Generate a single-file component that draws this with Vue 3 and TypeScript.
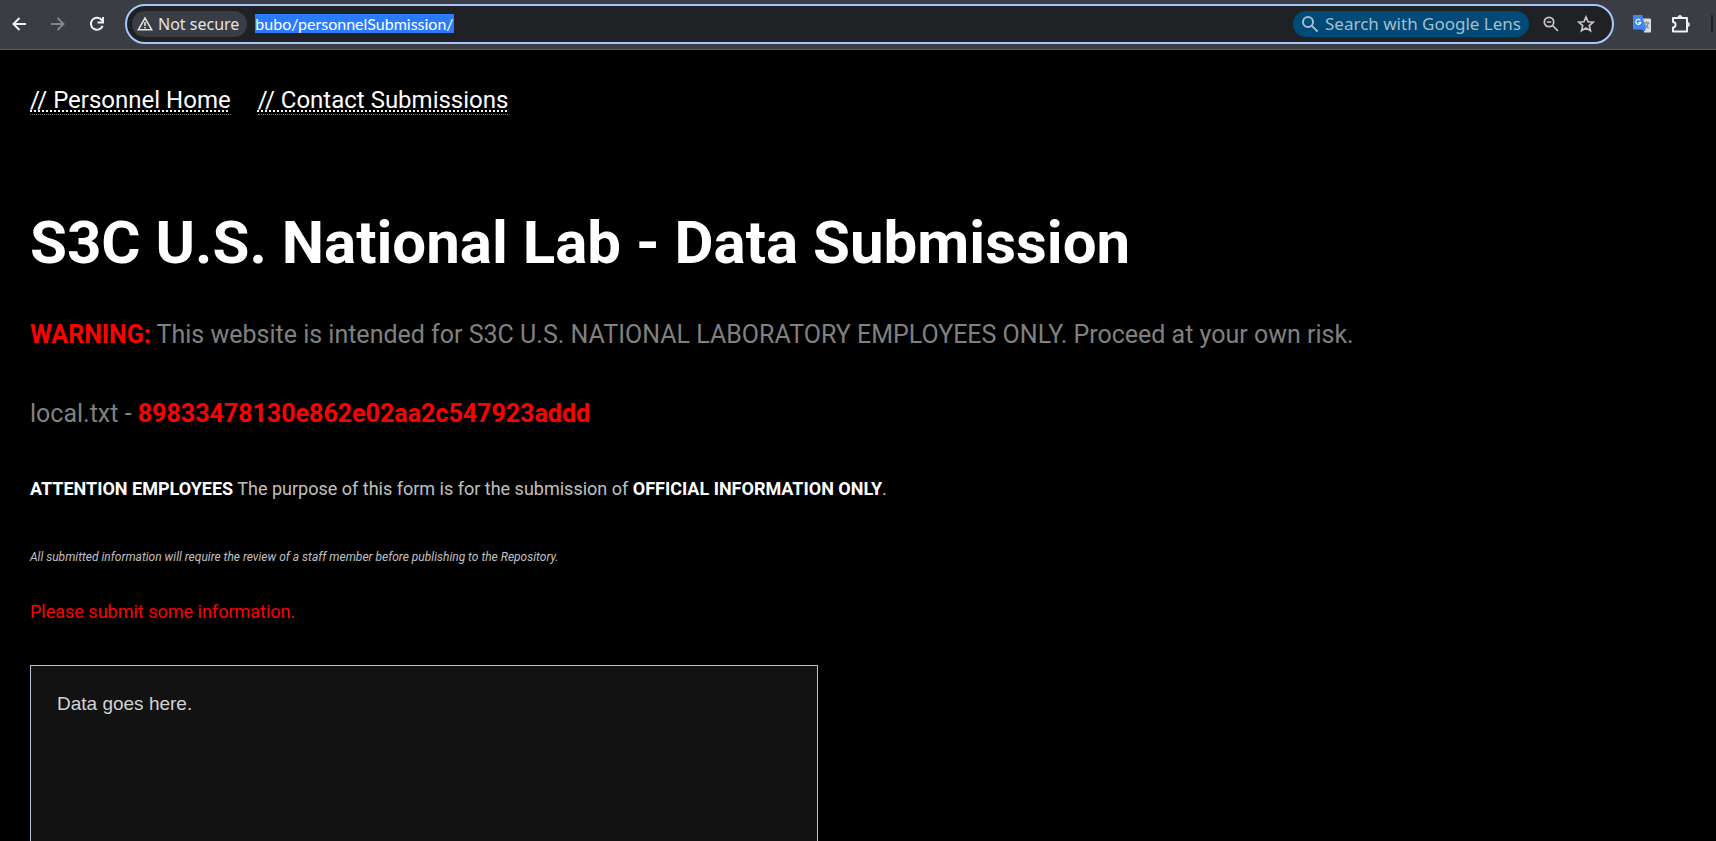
<script setup lang="ts">
import { ref } from 'vue'

interface NavLink {
  label: string
  href: string
}

const address = ref('bubo/personnelSubmission/')
const submission = ref('Data goes here.')

const links: NavLink[] = [
  { label: '// Personnel Home', href: '#home' },
  { label: '// Contact Submissions', href: '#contact' },
]
</script>

<template>
  <div class="window">
    <header class="toolbar">
      <div class="history">
        <button type="button" class="tool" aria-label="Back">
          <svg width="16" height="16" viewBox="0 0 16 16" fill="none" stroke="currentColor" stroke-width="2"><path d="M15 8H3M8.500 2L2.500 8l6 6" /></svg>
        </button>
        <button type="button" class="tool dim" aria-label="Forward">
          <svg width="16" height="16" viewBox="0 0 16 16" fill="none" stroke="currentColor" stroke-width="2"><path d="M1 8h12M7.500 2l6 6-6 6" /></svg>
        </button>
        <button type="button" class="tool" aria-label="Reload">
          <svg width="16" height="16" viewBox="0 0 16 16" fill="none" stroke="currentColor" stroke-width="2"><path d="M13.600 9.800A6 6 0 1 1 12.800 4.200L14 5.500M14 1v5.500H8.500" /></svg>
        </button>
      </div>

      <div class="omnibox">
        <button type="button" class="security">
          <svg width="16" height="16" viewBox="0 0 16 16" fill="none" stroke="currentColor" stroke-width="1.600"><path d="M8 2.200L14.600 13.700H1.400zM8 6v4M8 11v1.600" /></svg>
          <span>Not secure</span>
        </button>
        <div class="address">
          <input v-model="address" type="text" aria-label="Address" spellcheck="false" />
        </div>
        <button type="button" class="lens">
          <svg width="18" height="18" viewBox="0 0 18 18" fill="none" stroke="currentColor" stroke-width="2"><circle cx="7" cy="7" r="5" /><path d="M10.600 10.600l6 6" /></svg>
          <span>Search with Google Lens</span>
        </button>
        <button type="button" class="tool pale" aria-label="Zoom">
          <svg width="16" height="16" viewBox="0 0 16 16" fill="none" stroke="currentColor" stroke-width="1.700"><circle cx="6" cy="6" r="4.700" /><path d="M9.500 9.500l5.500 5.500M3.800 6h4.400" /></svg>
        </button>
        <button type="button" class="tool pale" aria-label="Bookmark this page">
          <svg width="18" height="18" viewBox="0 0 18 18" fill="none" stroke="currentColor" stroke-width="1.700"><path d="M9 2l2.050 4.800 5.200.45-3.950 3.400 1.200 5.100L9 13.050l-4.500 2.700 1.200-5.100-3.950-3.400 5.200-.45z" /></svg>
        </button>
      </div>

      <div class="extensions">
        <button type="button" class="tool" aria-label="Google Translate">
          <svg width="18" height="18" viewBox="0 0 18 18"><path d="M7 3.500h10.200a.8.8 0 0 1 .8.8v12.400a.8.8 0 0 1-.8.8H11z" fill="#dcdcdc" /><path d="M11 8h5.500M13.700 6.500V8M15.500 8c-.5 2.300-2 3.800-3.800 4.800M12 9.500c.7 1.700 2 2.900 3.700 3.700" fill="none" stroke="#607d8b" stroke-width="1.100" /><path d="M8.500 14.500h4l-2 3z" fill="#3052c5" /><path d="M.8 0h8.400l4 14.500H.8a.8.8 0 0 1-.8-.8V.8A.8.800 0 0 1 .8 0z" fill="#4285f4" /><path d="M7.400 5.400A2.500 2.500 0 1 0 7.700 7.500H5.400" fill="none" stroke="#fff" stroke-width="1.200" /></svg>
        </button>
        <button type="button" class="tool" aria-label="Extensions">
          <svg width="20" height="20" viewBox="0 0 20 20" fill="none" stroke="currentColor" stroke-width="2" stroke-linejoin="round"><path d="M2 4h14v13.500H2v-4c3.400-.3 3.400-5.200 0-5.500z" /><path d="M7 4a2 2 0 0 1 4 0zM16 8.500a2 2 0 0 1 0 4z" fill="currentColor" stroke="none" /><path d="M7 3.500a2 2 0 0 1 4 0M16.500 8.500a2 2 0 0 1 0 4" stroke-width="1" /></svg>
        </button>
        <span class="divider"></span>
      </div>
    </header>

    <main class="page">
      <nav class="links">
        <a v-for="link in links" :key="link.href" :href="link.href">{{ link.label }}</a>
      </nav>

      <h1>S3C U.S. National Lab - Data Submission</h1>
      <p class="lead"><strong>WARNING:</strong> This website is intended for S3C U.S. NATIONAL LABORATORY EMPLOYEES ONLY. Proceed at your own risk.</p>
      <p class="lead">local.txt - <strong>89833478130e862e02aa2c547923addd</strong></p>
      <p class="notice"><strong>ATTENTION EMPLOYEES</strong> The purpose of this form is for the submission of <strong>OFFICIAL INFORMATION ONLY</strong>.</p>
      <p class="small"><em>All submitted information will require the review of a staff member before publishing to the Repository.</em></p>

      <form @submit.prevent>
        <label for="submission">Please submit some information.</label>
        <textarea id="submission" v-model="submission" spellcheck="false"></textarea>
      </form>
    </main>
  </div>
</template>

<style>
html,
body {
  margin: 0;
  background: #000;
}
</style>

<style scoped>
.window {
  display: flex;
  flex-direction: column;
  height: 100vh;
  overflow: hidden;
  background: #000;
  color: #c0c0c0;
  font-family: Roboto, "Liberation Sans", sans-serif;
}

.toolbar {
  display: flex;
  flex: none;
  align-items: center;
  box-sizing: border-box;
  height: 50px;
  padding-bottom: 2px;
  border-bottom: 1px solid #5c5e62;
  background: #3b3d45;
  color: #f1f1f1;
  font-family: "Noto Sans", sans-serif;
}

button {
  display: flex;
  align-items: center;
  padding: 0;
  border: 0;
  background: none;
  color: inherit;
  font: inherit;
}

svg {
  display: block;
  flex: none;
}

.history {
  display: flex;
  gap: 23px;
  padding: 0 20px 0 11px;
}

.dim {
  color: #85868b;
}

.pale {
  color: #c7c7c7;
}

.omnibox {
  display: flex;
  flex: 1;
  align-items: center;
  box-sizing: border-box;
  height: 40px;
  padding: 0 17px 0 5px;
  border: 2px solid #a8c7fa;
  border-radius: 20px;
  background: #202124;
  font-size: 16px;
}

.security {
  gap: 5px;
  height: 26px;
  padding: 0 8px 0 5px;
  border-radius: 13px;
  background: #3b3d45;
  color: #e3e3e3;
}

.address {
  display: flex;
  flex: 1;
  min-width: 0;
  padding-left: 8px;
}

.address input {
  field-sizing: content;
  height: 19px;
  padding: 0;
  border: 0;
  outline: 0;
  background: #2a7bff;
  color: #fff;
  font-family: Lato, "Noto Sans", sans-serif;
  font-size: 16px;
  line-height: 19px;
}

.lens {
  gap: 6px;
  height: 26px;
  margin-right: 14px;
  padding: 0 8px;
  border-radius: 13px;
  background: #004a77;
  color: #a9bccb;
  font-size: 17px;
}

.omnibox .tool + .tool {
  margin-left: 18px;
}

.extensions {
  display: flex;
  align-items: center;
  gap: 20px;
  padding: 0 3px 0 19px;
}

.divider {
  width: 2px;
  height: 17px;
  background: #202124;
}

.page {
  flex: 1;
  min-height: 0;
  padding: 36px 30px 0;
}

.links {
  display: flex;
  gap: 27px;
  margin-bottom: 93px;
  font-size: 24px;
  line-height: 28px;
}

.links a {
  border-bottom: 1px dotted #808080;
  color: #fff;
  text-decoration: underline dotted 2px;
  text-decoration-skip-ink: none;
  text-underline-offset: 2px;
}

h1 {
  margin: 0 0 42px;
  color: #fff;
  font-size: 60px;
  font-weight: 700;
  line-height: 70px;
}

p {
  margin: 0;
}

.lead {
  margin-bottom: 50px;
  color: #808080;
  font-size: 25px;
  line-height: 29px;
}

.lead strong {
  color: #f00;
}

.notice {
  margin-bottom: 50px;
  font-size: 18px;
  line-height: 22px;
}

.notice strong {
  color: #fff;
}

.small {
  margin-bottom: 37px;
  font-size: 12px;
  line-height: 14px;
}

label {
  display: block;
  margin-bottom: 42px;
  color: #f00;
  font-size: 18px;
  line-height: 22px;
}

textarea {
  display: block;
  box-sizing: border-box;
  width: 788px;
  max-width: 100%;
  height: 320px;
  padding: 27px 26px;
  border: 1px solid #b0c4de;
  outline: 0;
  background: #121212;
  color: #d3d3d3;
  font-family: "Liberation Sans", Arial, sans-serif;
  font-size: 19px;
  line-height: 22px;
  resize: none;
}
</style>
